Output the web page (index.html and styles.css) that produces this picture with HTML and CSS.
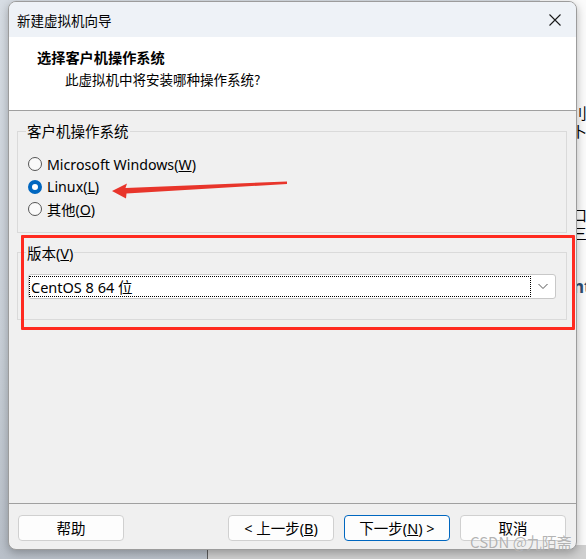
FILE: index.html
```html
<!DOCTYPE html>
<html lang="zh-CN">
<head>
<meta charset="utf-8">
<title>新建虚拟机向导</title>
<link rel="stylesheet" href="styles.css">
</head>
<body>
<div class="desk">
  <div class="back-pane"></div>
  <div class="back-win">
    <div class="bw-line bw-1">刂卜</div>
    <div class="bw-line bw-2">口三</div>
    <div class="bw-line bw-3">nt</div>
  </div>
  <div class="dialog">
    <div class="titlebar">
      <span class="title">新建虚拟机向导</span>
      <span class="close">
        <svg width="14" height="14" viewBox="0 0 14 14"><path d="M1.5 1.5 L12.5 12.5 M12.5 1.5 L1.5 12.5" stroke="#1a1a1a" stroke-width="1.1" fill="none"/></svg>
      </span>
    </div>
    <div class="header">
      <div class="h-title">选择客户机操作系统</div>
      <div class="h-sub">此虚拟机中将安装哪种操作系统?</div>
    </div>
    <div class="content">
      <fieldset class="group g-os">
        <legend>客户机操作系统</legend>
        <div class="radio"><span class="rb"></span><span>Microsoft Windows(<u>W</u>)</span></div>
        <div class="radio"><span class="rb on"></span><span>Linux(<u>L</u>)</span></div>
        <div class="radio"><span class="rb"></span><span>其他(<u>O</u>)</span></div>
      </fieldset>
      <fieldset class="group g-ver">
        <legend>版本(<u>V</u>)</legend>
        <div class="combo">
          <span class="combo-text">CentOS 8 64 位</span>
          <span class="combo-btn">
            <svg width="12" height="8" viewBox="0 0 12 8"><path d="M1.5 2 L6 6.5 L10.5 2" stroke="#555" stroke-width="1" fill="none"/></svg>
          </span>
        </div>
      </fieldset>
    </div>
    <div class="footer">
      <button class="btn">帮助</button>
      <span class="spacer"></span>
      <button class="btn">&lt; 上一步(<u>B</u>)</button>
      <button class="btn primary">下一步(<u>N</u>) &gt;</button>
      <button class="btn">取消</button>
    </div>
  </div>
  <div class="annot-box"></div>
  <svg class="annot-arrow" width="586" height="559" viewBox="0 0 586 559">
    <polygon points="112,191 127,183.5 125.5,188 287,181.5 287,184 126.5,193.5 126,198.5" fill="#e8352b"/>
  </svg>
  <div class="watermark">CSDN @九陌斋</div>
</div>
</body>
</html>
```
FILE: styles.css
```css
* { box-sizing: border-box; }
html, body { margin: 0; padding: 0; }
body {
  font-family: "Noto Sans", "Noto Sans CJK SC", sans-serif;
  font-size: 14px;
  color: #000;
}
.desk {
  position: relative;
  width: 586px;
  height: 559px;
  overflow: hidden;
  padding: 1px 0 0 8px;
  background: linear-gradient(to bottom, #d7dde4 0%, #c9d0d8 60%, #b9c0c9 100%);
}
.back-pane {
  position: absolute;
  left: 207px;
  top: 540px;
  width: 400px;
  height: 30px;
  background: #cfcfcf;
  border-left: 1px solid #5a5a5a;
}
.back-win {
  position: absolute;
  left: 540px;
  top: 0;
  width: 60px;
  height: 545px;
  background: #fbfbfb;
  font-family: "Noto Sans CJK SC", sans-serif;
  font-size: 15px;
}
.bw-line { position: absolute; left: 32px; line-height: 18px; }
.bw-1 { top: 104px; }
.bw-2 { top: 206px; }
.bw-3 { top: 278px; left: 33px; font-family: "Noto Sans", sans-serif; font-weight: 700; color: #2e4d70; font-size: 17px; }

.dialog {
  position: relative;
  z-index: 1;
  width: 569px;
  height: 549px;
  border: 1px solid #9c9c9c;
  border-radius: 8px;
  background: #f0f0f0;
  display: flex;
  flex-direction: column;
  overflow: hidden;
  box-shadow: 0 3px 10px rgba(0,0,0,0.28);
}
.titlebar {
  height: 35px;
  flex: none;
  background: #eef2f7;
  display: flex;
  align-items: center;
  justify-content: space-between;
  padding: 0 14px 0 8px;
}
.title {
  font-family: "Noto Sans CJK SC", sans-serif;
  font-size: 13.5px;
  line-height: 20px;
}
.close { display: flex; width: 14px; height: 14px; }
.header {
  height: 74px;
  flex: none;
  background: #fff;
  border-bottom: 1px solid #a0a0a0;
  padding: 10px 0 0 28px;
}
.h-title {
  font-family: "Noto Sans CJK SC", sans-serif;
  font-weight: 700;
  font-size: 14.2px;
  line-height: 20px;
}
.h-sub {
  font-family: "Noto Sans CJK SC", sans-serif;
  font-size: 13.5px;
  line-height: 20px;
  margin: 2px 0 0 28px;
}
.content {
  flex: 1;
  padding: 10px 9px 0 8px;
  display: flex;
  flex-direction: column;
}
.group {
  margin: 0;
  min-width: 0;
  border: 1px solid #dadada;
  padding: 12px 10px 11px 10px;
}
.group legend {
  font-size: 14.5px;
  line-height: 20px;
  padding: 0 1px;
  margin-left: -2px;
}
.g-ver { margin-top: 10px; padding: 11px 10px 20px 10px; }
.radio {
  display: flex;
  align-items: center;
  height: 22.5px;
  gap: 5px;
  font-size: 14.2px;
}
.rb {
  width: 14px;
  height: 14px;
  border-radius: 50%;
  border: 1px solid #555;
  background: #fafafa;
  flex: none;
}
.rb.on {
  border: 4.5px solid #0067c0;
  background: #fff;
}
.combo {
  height: 25px;
  border: 1px solid #c8c8c8;
  border-radius: 3px;
  background: #fff;
  display: flex;
  align-items: stretch;
  padding: 1px 0 1px 0;
}
.combo-text {
  flex: 1;
  outline: 1px dotted #000;
  outline-offset: -1px;
  display: flex;
  align-items: center;
  padding-left: 2px;
  font-size: 14.5px;
}
.combo-btn {
  width: 24px;
  flex: none;
  display: flex;
  align-items: center;
  justify-content: center;
}
.footer {
  flex: none;
  border-top: 1px solid #a0a0a0;
  padding: 11px 10px 8px 9px;
  display: flex;
  gap: 10px;
}
.spacer { flex: 1; }
.btn {
  width: 106px;
  height: 26px;
  border: 1px solid #d0d0d0;
  border-radius: 4px;
  background: #fdfdfd;
  font-family: "Noto Sans", "Noto Sans CJK SC", sans-serif;
  font-size: 14.5px;
  color: #000;
  padding: 0;
  line-height: 24px;
}
.btn.primary { border-color: #0067c0; }
.annot-box {
  position: absolute;
  z-index: 2;
  left: 21px;
  top: 235px;
  width: 554px;
  height: 95px;
  border: 3px solid #ff2a20;
  border-radius: 1px;
}
.annot-arrow {
  position: absolute;
  z-index: 2;
  left: 0;
  top: 0;
}
.watermark {
  position: absolute;
  z-index: 3;
  left: 470px;
  top: 532px;
  font-family: "Noto Sans CJK SC", sans-serif;
  font-size: 15px;
  line-height: 20px;
  color: rgba(130,130,130,0.6);
  text-shadow: 0 0 1px rgba(255,255,255,0.8);
}
```
